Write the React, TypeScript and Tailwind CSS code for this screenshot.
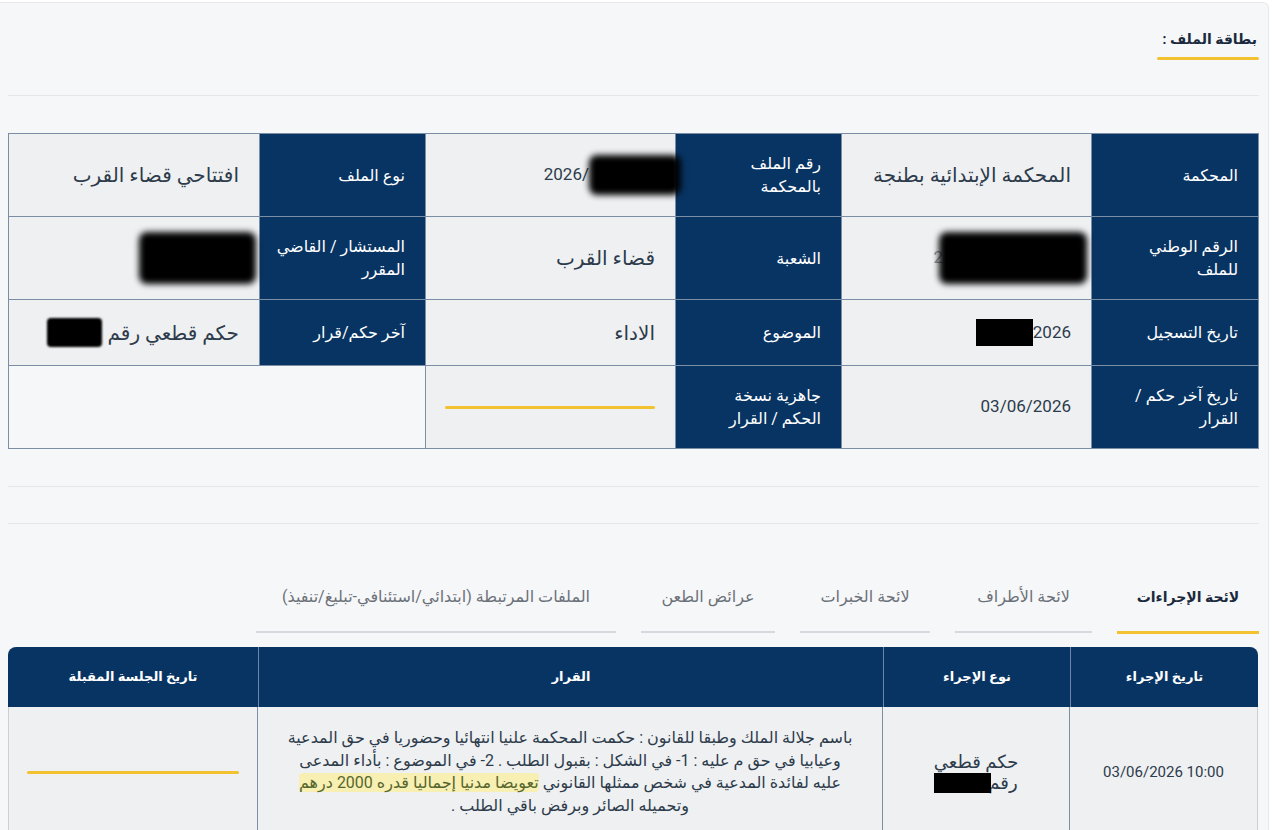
import React from 'react';

const Label = ({ children }: { children: React.ReactNode }) => (
    <div className="bg-[#083463] text-white text-[16px] leading-[23px] flex items-center pr-[20px]">
        {children}
    </div>
);

// arabic glyphs of the fallback font run small, so arabic values get a larger size than digits
const Value = ({ children, digits }: { children?: React.ReactNode; digits?: boolean }) => (
    <div className={`bg-[#eef0f2] text-[#2d3b4b] flex items-center pr-[20px] ${digits ? 'text-[17px]' : 'text-[20px]'}`}>
        {children}
    </div>
);

// redacted pieces of the screenshot
const Redact = ({ className }: { className: string }) => (
    <span className={`inline-block bg-black ${className}`} />
);

const tabs = [
    { label: 'لائحة الإجراءات', w: 'w-[142px]', active: true },
    { label: 'لائحة الأطراف', w: 'w-[137px]' },
    { label: 'لائحة الخبرات', w: 'w-[130px]' },
    { label: 'عرائض الطعن', w: 'w-[134px]' },
    { label: 'الملفات المرتبطة (ابتدائي/استئنافي-تبليغ/تنفيذ)', w: 'w-[360px]' },
];

export default function App() {
    return (
        <div dir="rtl" className="min-h-[830px] bg-white pr-[11px] pt-[2px] font-[Roboto,'DejaVu_Sans',sans-serif]">
            <div className="bg-[#f6f7f9] border-t border-r border-[#e6e8eb] rounded-tr-md pr-[9px] pl-[8px] min-h-[828px] overflow-hidden">
                {/* Title */}
                <div className="pt-[26px] flex">
                    <div className="flex flex-col">
                        <h2 className="text-[14px] leading-[20px] font-bold text-[#1b2a3d] pr-[2px]">بطاقة الملف :</h2>
                        <div className="mt-[8px] h-[3px] w-[102px] bg-[#f2c230] rounded-full" />
                    </div>
                </div>

                <div className="mt-[35px] h-px bg-[#e4e6e9]" />

                {/* File card table */}
                <div className="mt-[37px] grid grid-cols-[166px_249px_165px_249px_165px_1fr] grid-rows-[82px_82px_65px_82px] gap-px bg-[#7b8ea5] border border-[#7b8ea5]">
                    <Label>المحكمة</Label>
                    <Value>المحكمة الإبتدائية بطنجة</Value>
                    <Label>رقم الملف<br />بالمحكمة</Label>
                    <div className="bg-[#eef0f2] text-[#2d3b4b] text-[17px] flex items-center">
                        <span dir="ltr" className="flex items-center">
                            2026/
                            <Redact className="w-[92px] h-[40px] -mr-[6px] rounded-lg blur-[3px]" />
                        </span>
                    </div>
                    <Label>نوع الملف</Label>
                    <Value>افتتاحي قضاء القرب</Value>

                    <Label>الرقم الوطني<br />للملف</Label>
                    <div className="bg-[#eef0f2] flex items-center pr-[4px]">
                        <span dir="ltr" className="flex items-center text-[17px] text-[#8a939c]">
                            2<Redact className="w-[148px] h-[52px] -ml-[4px] rounded-lg blur-[3px]" />
                        </span>
                    </div>
                    <Label>الشعبة</Label>
                    <Value>قضاء القرب</Value>
                    <Label>المستشار / القاضي<br />المقرر</Label>
                    <div className="bg-[#eef0f2] flex items-center pr-[3px]">
                        <Redact className="w-[117px] h-[52px] rounded-lg blur-[3px]" />
                    </div>

                    <Label>تاريخ التسجيل</Label>
                    <div className="bg-[#eef0f2] text-[#2d3b4b] text-[17px] flex items-center pr-[20px]">
                        <span dir="ltr" className="flex items-center">
                            <Redact className="w-[57px] h-[27px]" />
                            2026
                        </span>
                    </div>
                    <Label>الموضوع</Label>
                    <Value>الاداء</Value>
                    <Label>آخر حكم/قرار</Label>
                    <div className="bg-[#eef0f2] text-[#2d3b4b] text-[20px] flex items-center gap-[6px] pr-[20px]">
                        <span>حكم قطعي رقم</span>
                        <Redact className="w-[55px] h-[29px] rounded-sm blur-[1px]" />
                    </div>

                    <Label>تاريخ آخر حكم /<br />القرار</Label>
                    <Value digits>03/06/2026</Value>
                    <Label>جاهزية نسخة<br />الحكم / القرار</Label>
                    <div className="bg-[#eef0f2] flex items-center pr-[20px]">
                        <div className="h-[3px] w-[210px] bg-[#f2c230] rounded-full" />
                    </div>
                    <div className="col-span-2 bg-[#f6f7f9]" />
                </div>

                <div className="mt-[37px] h-px bg-[#e4e6e9]" />
                <div className="mt-[36px] h-px bg-[#e4e6e9]" />

                {/* Tabs */}
                <div className="mt-[63px] flex gap-[25px]">
                    {tabs.map((t) => (
                        <div key={t.label} className={`${t.w} flex flex-col items-center`}>
                            <span className={`leading-[20px] ${t.active ? 'text-[14px] font-bold text-[#1b2a3d]' : 'text-[16px] text-[#6b7178]'}`}>
                                {t.label}
                            </span>
                            <div className={`mt-[24px] w-full ${t.active ? 'h-[3px] bg-[#f2c230]' : 'h-[2px] bg-[#d6d9dd]'}`} />
                        </div>
                    ))}
                </div>

                {/* Procedures table */}
                <div className="mt-[13px] mr-[1px]">
                    <div className="grid grid-cols-[188px_187px_625px_1fr] h-[60px] bg-[#083463] rounded-t-[8px] text-white text-[13px] font-bold">
                        <div className="flex items-center justify-center border-l border-[#6d86a6]">تاريخ الإجراء</div>
                        <div className="flex items-center justify-center border-l border-[#6d86a6]">نوع الإجراء</div>
                        <div className="flex items-center justify-center border-l border-[#6d86a6]">القرار</div>
                        <div className="flex items-center justify-center">تاريخ الجلسة المقبلة</div>
                    </div>
                    <div className="grid grid-cols-[188px_187px_625px_1fr] h-[130px] bg-[#eef0f2] border-x border-[#c9d0d8] text-[#2d3b4b]">
                        <div className="flex items-center justify-center border-l border-[#7f8fa3]">
                            <span dir="ltr" className="text-[15px]">03/06/2026 10:00</span>
                        </div>
                        <div className="flex flex-col items-center justify-center border-l border-[#7f8fa3] leading-[21px] text-[18px]">
                            <span>حكم قطعي</span>
                            <span className="flex items-center">
                                رقم
                                <Redact className="w-[57px] h-[20px] -mr-[3px]" />
                            </span>
                        </div>
                        <div className="flex items-center justify-center border-l border-[#7f8fa3] px-[8px]">
                            <p className="text-center text-[16px] leading-[22.5px] whitespace-nowrap">
                                باسم جلالة الملك وطبقا للقانون : حكمت المحكمة علنيا انتهائيا وحضوريا في حق المدعية
                                <br />
                                وعيابيا في حق م عليه : 1- في الشكل : بقبول الطلب . 2- في الموضوع : بأداء المدعى
                                <br />
                                عليه لفائدة المدعية في شخص ممثلها القانوني{' '}
                                <span className="bg-[#f8efb2] text-[#56662e] rounded-sm">تعويضا مدنيا إجماليا قدره 2000 درهم</span>
                                <br />
                                وتحميله الصائر وبرفض باقي الطلب .
                            </p>
                        </div>
                        <div className="flex items-center justify-center px-[18px]">
                            <div className="h-[3px] w-full bg-[#f2c230] rounded-full" />
                        </div>
                    </div>
                </div>
            </div>
        </div>
    );
}
